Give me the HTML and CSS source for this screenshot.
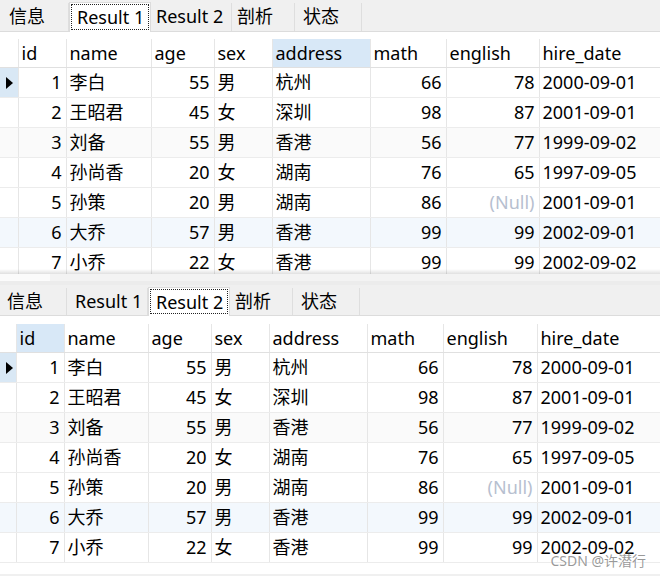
FILE: index.html
```html
<!DOCTYPE html>
<html lang="zh-CN">
<head>
  <meta charset="UTF-8">
  <title>Result</title>
  <link rel="stylesheet" href="styles.css">
</head>
<body>
  <div class="panel panel-top">
    <div class="tabs">
      <div class="tab tab-info">信息</div>
      <div class="tab tab-r1 active"><span>Result 1</span></div>
      <div class="tab tab-r2">Result 2</div>
      <div class="tab tab-prof">剖析</div>
      <div class="tab tab-stat">状态</div>
    </div>
    <div class="grid-wrap">
      <table class="grid">
        <colgroup>
          <col style="width:18px"><col style="width:48px"><col style="width:85px"><col style="width:63px"><col style="width:58px"><col style="width:98px"><col style="width:76px"><col style="width:93px"><col style="width:121px">
        </colgroup>
        <thead>
          <tr><th></th><th>id</th><th>name</th><th>age</th><th>sex</th><th class="hl">address</th><th>math</th><th>english</th><th>hire_date</th></tr>
        </thead>
        <tbody>
          <tr><td class="ind sel"><span class="arrow"></span></td><td class="num">1</td><td>李白</td><td class="num">55</td><td>男</td><td>杭州</td><td class="num">66</td><td class="num">78</td><td>2000-09-01</td></tr>
          <tr><td class="ind"></td><td class="num">2</td><td>王昭君</td><td class="num">45</td><td>女</td><td>深圳</td><td class="num">98</td><td class="num">87</td><td>2001-09-01</td></tr>
          <tr class="alt"><td class="ind"></td><td class="num">3</td><td>刘备</td><td class="num">55</td><td>男</td><td>香港</td><td class="num">56</td><td class="num">77</td><td>1999-09-02</td></tr>
          <tr><td class="ind"></td><td class="num">4</td><td>孙尚香</td><td class="num">20</td><td>女</td><td>湖南</td><td class="num">76</td><td class="num">65</td><td>1997-09-05</td></tr>
          <tr><td class="ind"></td><td class="num">5</td><td>孙策</td><td class="num">20</td><td>男</td><td>湖南</td><td class="num">86</td><td class="num null">(Null)</td><td>2001-09-01</td></tr>
          <tr class="hover"><td class="ind"></td><td class="num">6</td><td>大乔</td><td class="num">57</td><td>男</td><td>香港</td><td class="num">99</td><td class="num">99</td><td>2002-09-01</td></tr>
          <tr><td class="ind"></td><td class="num">7</td><td>小乔</td><td class="num">22</td><td>女</td><td>香港</td><td class="num">99</td><td class="num">99</td><td>2002-09-02</td></tr>
        </tbody>
      </table>
    </div>
  </div>
  <div class="hscroll"><div class="thumb"></div></div>
  <div class="splitter"></div>

  <div class="panel panel-bottom">
    <div class="tabs">
      <div class="tab tab-info2">信息</div>
      <div class="tab tab-r1b">Result 1</div>
      <div class="tab tab-r2b active"><span>Result 2</span></div>
      <div class="tab tab-prof">剖析</div>
      <div class="tab tab-stat">状态</div>
    </div>
    <div class="grid-wrap">
      <table class="grid">
        <colgroup>
          <col style="width:16px"><col style="width:48px"><col style="width:84px"><col style="width:63px"><col style="width:58px"><col style="width:98px"><col style="width:76px"><col style="width:94px"><col style="width:123px">
        </colgroup>
        <thead>
          <tr><th></th><th class="hl">id</th><th>name</th><th>age</th><th>sex</th><th>address</th><th>math</th><th>english</th><th>hire_date</th></tr>
        </thead>
        <tbody>
          <tr><td class="ind sel"><span class="arrow"></span></td><td class="num">1</td><td>李白</td><td class="num">55</td><td>男</td><td>杭州</td><td class="num">66</td><td class="num">78</td><td>2000-09-01</td></tr>
          <tr><td class="ind"></td><td class="num">2</td><td>王昭君</td><td class="num">45</td><td>女</td><td>深圳</td><td class="num">98</td><td class="num">87</td><td>2001-09-01</td></tr>
          <tr class="alt"><td class="ind"></td><td class="num">3</td><td>刘备</td><td class="num">55</td><td>男</td><td>香港</td><td class="num">56</td><td class="num">77</td><td>1999-09-02</td></tr>
          <tr><td class="ind"></td><td class="num">4</td><td>孙尚香</td><td class="num">20</td><td>女</td><td>湖南</td><td class="num">76</td><td class="num">65</td><td>1997-09-05</td></tr>
          <tr><td class="ind"></td><td class="num">5</td><td>孙策</td><td class="num">20</td><td>男</td><td>湖南</td><td class="num">86</td><td class="num null">(Null)</td><td>2001-09-01</td></tr>
          <tr class="hover"><td class="ind"></td><td class="num">6</td><td>大乔</td><td class="num">57</td><td>男</td><td>香港</td><td class="num">99</td><td class="num">99</td><td>2002-09-01</td></tr>
          <tr><td class="ind"></td><td class="num">7</td><td>小乔</td><td class="num">22</td><td>女</td><td>香港</td><td class="num">99</td><td class="num">99</td><td>2002-09-02</td></tr>
        </tbody>
      </table>
    </div>
    <div class="watermark">CSDN @许潜行</div>
  </div>
</body>
</html>
```

FILE: styles.css
```css
/* Global */
* {
  margin: 0;
  padding: 0;
  box-sizing: border-box;
}

body {
  width: 660px;
  height: 576px;
  overflow: hidden;
  background: #fff;
  color: #000;
  font-family: "Noto Sans", "Noto Sans CJK SC", sans-serif;
  font-size: 18px;
}

/* Panels */
.panel {
  position: relative;
  overflow: hidden;
}

.panel-top {
  height: 274px;
}

.panel-top::after {
  content: "";
  position: absolute;
  left: 0;
  right: 0;
  bottom: 0;
  height: 5px;
  background: linear-gradient(to bottom, rgba(0, 0, 0, 0), rgba(0, 0, 0, 0.12));
}

.panel-bottom {
  height: 291px;
  border-bottom: 2px solid #f0f0f0;
}

.hscroll {
  height: 7px;
  background: #f3f3f3;
}

.hscroll .thumb {
  width: 50px;
  height: 100%;
  background: #fbfbfb;
}

.splitter {
  height: 4px;
  background: #ececec;
}

/* Tabs */
.tabs {
  display: flex;
  height: 32px;
  padding-top: 3px;
  background: #f0f0f0;
  border-bottom: 1px solid #dcdcdc;
}

.panel-bottom .tabs {
  height: 31px;
}

.tab {
  height: 100%;
  padding-left: 9px;
  line-height: 27px;
  border-right: 1px solid #dedede;
  white-space: nowrap;
}

.tab.active {
  margin-top: -1px;
  height: calc(100% + 2px);
  padding: 2px 2px 3px 2px;
  background: #fff;
  border: 1px solid #dcdcdc;
  border-bottom: none;
}

.tab.active span {
  display: block;
  height: 100%;
  padding-left: 5px;
  line-height: 24px;
  outline: 1px dotted #222;
}

.tab-info  { width: 69px; }
.tab-r1    { width: 82px; }
.tab-r2    { width: 81px; padding-left: 5px; }
.tab-prof  { width: 63px; padding-left: 5px; }
.tab-stat  { width: 67px; padding-left: 8px; }

.tab-info2 { width: 67px; padding-left: 7px; }
.tab-r1b   { width: 81px; padding-left: 8px; }
.tab-r2b   { width: 82px; }

/* Grid */
.grid-wrap {
  padding-top: 7px;
}

.panel-bottom .grid-wrap {
  padding-top: 8px;
}

.grid {
  width: 660px;
  table-layout: fixed;
  border-collapse: collapse;
}

.grid th,
.grid td {
  padding: 0 3px;
  border-right: 1px solid #e6e6e6;
  border-bottom: 1px solid #ececec;
  text-align: left;
  font-weight: normal;
  white-space: nowrap;
  overflow: hidden;
}

.grid th {
  height: 28px;
  line-height: 26px;
  border-bottom: 1px solid #e0e0e0;
}

.grid th.hl {
  background: #d8e8f7;
}

.grid td {
  height: 30px;
  line-height: 28px;
}

.grid td.num {
  text-align: right;
  padding-right: 4px;
}

.grid td.null {
  color: #b7bfd0;
}

.grid td.ind {
  padding: 0;
  position: relative;
}

.grid td.ind.sel {
  background: #d9e8f5;
}

.arrow {
  position: absolute;
  left: 6px;
  top: 9px;
  width: 0;
  height: 0;
  border-top: 6px solid transparent;
  border-bottom: 6px solid transparent;
  border-left: 7px solid #000;
}

.grid tr.alt td {
  background: #fafafa;
}

.grid tr.hover td {
  background: #f3f8fd;
}

.watermark {
  position: absolute;
  right: 14px;
  bottom: 4px;
  font-size: 14px;
  color: rgba(120, 120, 120, 0.75);
  text-shadow: 0 0 2px #fff;
}
```
